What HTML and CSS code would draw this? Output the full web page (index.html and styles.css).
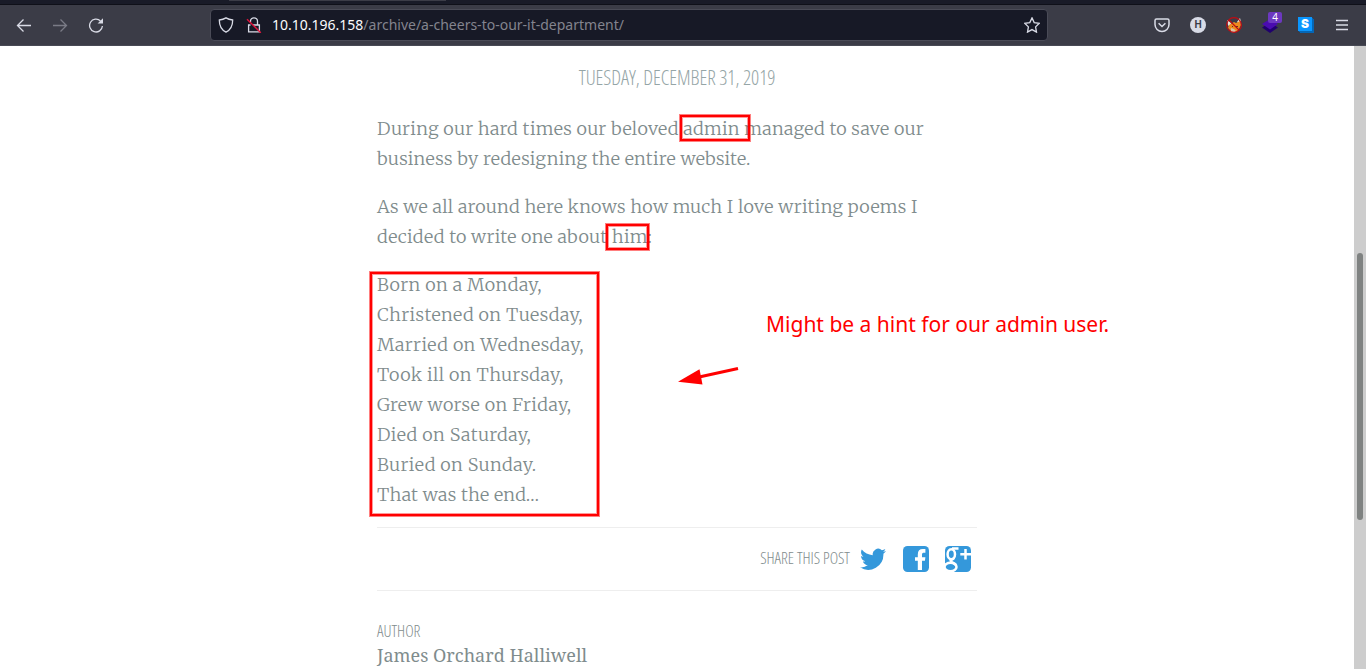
FILE: index.html
```
<!DOCTYPE html>
<html lang="en">
<head>
<meta charset="utf-8">
<title>A cheers to our IT department</title>
<link rel="stylesheet" href="styles.css">
</head>
<body>
<header class="toolbar">
  <div class="tabstrip"><span class="tab-edge"></span></div>
  <div class="nav">
    <div class="history">
      <svg class="ico" viewBox="0 0 16 16"><path d="M15 8.500H1.500M7.500 2.500l-6 6 6 6"/></svg>
      <svg class="ico disabled" viewBox="0 0 16 16"><path d="M1 8.500h13.500M8.500 2.500l6 6-6 6"/></svg>
      <svg class="ico" viewBox="0 0 16 16"><path d="M12.500 4A6.400 6.400 0 1 0 14.400 9"/><path class="solid" d="M15 1.200v5.400H9.600z"/></svg>
    </div>
    <div class="urlbar">
      <svg class="ico" viewBox="0 0 16 16"><path d="M8 .9C6 2.200 3.800 2.800 1.300 3c0 5.700 1.700 9.700 6.700 12.100 5-2.400 6.700-6.400 6.700-12.100C12.200 2.800 10 2.200 8 .9z"/></svg>
      <svg class="ico lock" viewBox="0 0 16 16"><path d="M4.500 5V4.300a3.500 3.500 0 0 1 7 0V8M4.500 8h-1.900v6.800h10.800V8H7"/><path class="slash" d="M1 2.200 14.800 15.800"/></svg>
      <span class="url"><b>10.10.196.158</b>/archive/a-cheers-to-our-it-department/</span>
      <svg class="ico" viewBox="0 0 16 16"><path d="m8 .9 2.200 4.700 5.100.7-3.700 3.600.9 5.200L8 12.600l-4.500 2.500.9-5.200L.7 6.300l5.100-.7z"/></svg>
    </div>
    <div class="extensions">
      <svg class="ico pocket" viewBox="0 0 16 16"><path d="M2.500 2h11a1.500 1.500 0 0 1 1.500 1.500V7.500a7 7 0 0 1-14 0V3.500A1.500 1.500 0 0 1 2.500 2z"/><path d="m4.600 6.200 3.400 3.300 3.400-3.300"/></svg>
      <span class="badge-h">H</span>
      <svg class="ext" viewBox="0 0 16 16"><path fill="#e8e4de" d="m1 3 4 3-1 5-2-3zM14 1l-3 4 3 3 1-3z"/><path fill="#ee8b20" d="m3 8 5-3 2 1 4-2 1 4-2 4-3 3-5-1-3-3z"/><path fill="#d9c2a8" d="m5 11 3 1 2 2-2 1.500-3-.5z"/><path fill="#603420" d="M10 9h2v1h-2zM6 9h1v1H6z"/><circle cx="8" cy="8" r="7.400" fill="none" stroke="#c20b12" stroke-width="1.100"/><path d="m3 3 10 10" stroke="#c20b12" stroke-width="1.100"/></svg>
      <span class="stack"><svg class="ext" viewBox="0 0 16 16"><path fill="#20006e" d="m0 10.500 8-5 8 5-8 5.500z"/><path fill="#4a0bb0" d="m0 7 8-5 8 5-8 5.500z"/></svg><span class="count">4</span></span>
      <span class="badge-s">S</span>
      <svg class="ico menu" viewBox="0 0 16 16"><path d="M2 3.500h12M2 8h12M2 12.500h12"/></svg>
    </div>
  </div>
</header>
<div class="viewport">
  <main class="post">
    <div class="date">Tuesday, December 31, 2019</div>
    <p>During our hard times our beloved admin managed to save our<br>business by redesigning the entire website.</p>
    <p>As we all around here knows how much I love writing poems I<br>decided to write one about him:</p>
    <p class="poem">Born on a Monday,<br>Christened on Tuesday,<br>Married on Wednesday,<br>Took ill on Thursday,<br>Grew worse on Friday,<br>Died on Saturday,<br>Buried on Sunday.<br><span class="last">That was the end…</span></p>
    <div class="share">
      <span class="share-label">Share this post</span>
      <svg class="social" viewBox="0 0 26 26"><path d="M26 5c-1 .5-2 .8-3 .9 1.100-.7 1.900-1.700 2.300-2.900-1 .6-2.200 1-3.400 1.300A5.400 5.400 0 0 0 12.800 9.200C8.300 9 4.400 6.900 1.800 3.600a5.300 5.300 0 0 0 1.600 7.100c-.9 0-1.700-.2-2.400-.6 0 2.600 1.800 4.700 4.300 5.200-.8.200-1.600.3-2.400.1.700 2.100 2.700 3.600 5 3.700A10.800 10.800 0 0 1 0 21.300 15.200 15.200 0 0 0 23.400 7.800C24.400 7 25.300 6.100 26 5z"/></svg>
      <svg class="social" viewBox="0 0 26 26"><rect width="26" height="26" rx="4.500"/><path class="cut" d="M14.800 24V14.700H12v-3.500h2.800V8.500c0-3.600 1.800-5.400 5-5.400h2.600v3.600h-1.200c-1.700 0-2.200.5-2.200 1.900v2.600h3.400l-.5 3.500H19V24z"/></svg>
      <svg class="social" viewBox="0 0 26 26"><rect width="26" height="26" rx="4.500"/><g class="gplus"><ellipse cx="6.300" cy="8.300" rx="3.700" ry="5"/><ellipse cx="5.500" cy="21" rx="6" ry="4.300"/><path d="M7 2.500h6.500M9 12c-1 2-4.500 1.500-3 3.500 1 1.200 4 1.800 5 3.500M20.500 3v10.500M15.300 8.300H26"/></g></svg>
    </div>
    <div class="label">Author</div>
    <div class="name">James Orchard Halliwell</div>
  </main>
  <div class="scrollbar"><div class="thumb"></div></div>
  <div class="mark mark-admin"></div>
  <div class="mark mark-him"></div>
  <div class="mark mark-poem"></div>
  <svg class="arrow" viewBox="0 0 60 20"><path d="M60 4.500 20 13.200" stroke="#f00" stroke-width="3"/><path fill="#f00" d="M0 17.800 21.500 5.200 24.500 20.500z"/></svg>
  <div class="note">Might be a hint for our admin user.</div>
</div>
</body>
</html>
```
FILE: styles.css
```
body{margin:0;background:#fff;overflow:hidden}
.toolbar{height:46px;background:#3b3c47;box-sizing:border-box;border-bottom:1px solid #484a55}
.tabstrip{height:5px;background:#191b28;box-sizing:border-box;border-bottom:1px solid #0f1019;padding-left:229px}
.tab-edge{display:block;width:217px;height:1px;background:#3b3c47}
.nav{height:40px;display:flex;align-items:center}
.ico{flex:none;width:16px;height:16px;fill:none;stroke:#d9dbe6;stroke-width:1.3}
.pocket{stroke-width:1.5}
.disabled{opacity:.4}
.solid{fill:#d9dbe6;stroke:none}
.slash{stroke:#e2143c;stroke-width:1.4}
.history{display:flex;gap:20px;padding-left:16px;width:194px}
.urlbar{display:flex;align-items:center;width:838px;height:32px;background:#171926;border:1px solid #4a4b57;border-radius:4px;box-sizing:border-box;padding:0 7px}
.lock{margin:0 10px 0 12px}
.url{flex:1;font:14px/20px "Noto Sans",sans-serif;color:#83848e;white-space:nowrap}
.url b{font-weight:400;color:#fbfbfe}
.extensions{display:flex;align-items:center;gap:20px;margin-left:106px}
.ext{display:block;width:16px;height:16px}
.badge-h{width:16px;height:16px;border-radius:8px;background:#d8dbe6;color:#3b3c47;font:bold 10px/16px "Liberation Sans",sans-serif;text-align:center}
.stack{position:relative}
.count{position:absolute;left:6px;top:-5px;width:14px;height:11px;border-radius:2px;background:#6c38c0;color:#fff;font:10px/11px "Noto Sans",sans-serif;text-align:center}
.badge-s{width:14px;height:14px;margin:-2px 2px 0 0;background:#0a96ff;box-shadow:1px 1px #0566b5,2px 2px #0566b5;color:#fff;font:900 12px/14px Inter,sans-serif;text-align:center}
.viewport{position:relative;height:623px;display:flex;justify-content:space-between}
.post{width:600px;margin-left:377px;color:#7f8c8d;font:300 18px/30px Merriweather,"Noto Serif","DejaVu Serif",serif}
.post p{margin:0 0 18px;letter-spacing:.24px;white-space:nowrap}
.post .poem{margin-bottom:17px;letter-spacing:.37px}
.poem .last{letter-spacing:.24px}
.date{padding:17px 0 21px;font:300 20px/30px "Open Sans",sans-serif;font-stretch:75%;letter-spacing:-.05px;text-transform:uppercase;text-align:center;color:#95a5a6}
.share{display:flex;align-items:center;justify-content:flex-end;height:62px;padding-right:6px;border-top:1px solid #eee;border-bottom:1px solid #eee}
.share-label,.label{font:300 16px/20px "Open Sans",sans-serif;font-stretch:75%;text-transform:uppercase}
.share-label{margin-top:-2px;letter-spacing:-.03px}
.social{width:26px;height:26px;margin:-1px 0 0 16.5px;fill:#3498db}
.share-label+.social{margin-left:10px}
.cut{fill:#fff}
.gplus{fill:none;stroke:#fff;stroke-width:2.5}
.label{margin-top:30px}
.name{margin-top:-1px;font:400 18px/30px "Roboto Slab","Noto Serif","DejaVu Serif",serif}
.scrollbar{width:12px;height:623px;background:#cdcdcd}
.thumb{width:6px;height:267px;margin:207px 3px 0;border-radius:3px;background:#7f8281}
.mark{position:absolute;box-sizing:border-box;border:2px solid #f00;box-shadow:0 0 0 1px rgba(255,0,0,.5),inset 0 0 0 1px rgba(255,0,0,.4)}
.mark-admin{left:680px;top:69px;width:70px;height:26px}
.mark-him{left:606px;top:178px;width:43px;height:26px}
.mark-poem{left:370px;top:226px;width:229px;height:244px}
.arrow{position:absolute;left:678px;top:318px;width:60px;height:20px;overflow:visible}
.note{position:absolute;left:766px;top:263px;font:21px/30px "Noto Sans",sans-serif;color:#f00;white-space:nowrap}
```
